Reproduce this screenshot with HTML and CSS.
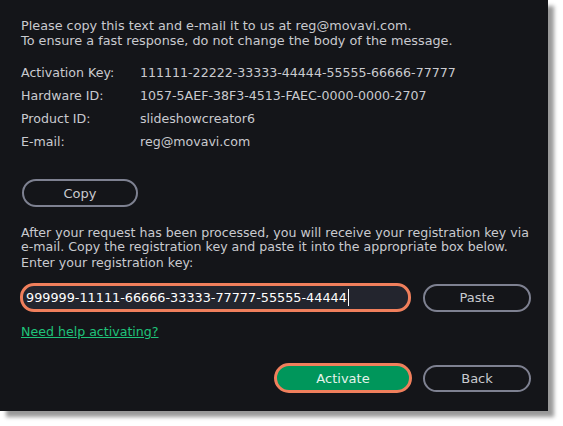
FILE: index.html
```html
<!DOCTYPE html>
<html>
<head>
<meta charset="utf-8">
<link rel="stylesheet" href="styles.css">
</head>
<body>
<div class="dialog">
  <p class="intro">Please copy this text and e-mail it to us at reg@movavi.com.<br>To ensure a fast response, do not change the body of the message.</p>
  <div class="info">
    <span class="label">Activation Key:</span><span class="value">111111-22222-33333-44444-55555-66666-77777</span>
    <span class="label">Hardware ID:</span><span class="value">1057-5AEF-38F3-4513-FAEC-0000-0000-2707</span>
    <span class="label">Product ID:</span><span class="value">slideshowcreator6</span>
    <span class="label">E-mail:</span><span class="value">reg@movavi.com</span>
  </div>
  <button class="btn btn-copy">Copy</button>
  <p class="after">After your request has been processed, you will receive your registration key via e-mail. Copy the registration key and paste it into the appropriate box below.</p>
  <p class="enter">Enter your registration key:</p>
  <div class="key-row">
    <div class="key-input">999999-11111-66666-33333-77777-55555-44444<span class="caret"></span></div>
    <button class="btn btn-paste">Paste</button>
  </div>
  <a class="help" href="#">Need help activating?</a>
  <div class="actions">
    <button class="btn btn-activate">Activate</button>
    <button class="btn btn-back">Back</button>
  </div>
</div>
</body>
</html>
```
FILE: styles.css
```css
html, body {
  margin: 0;
  padding: 0;
  background: #ffffff;
}
body {
  width: 563px;
  height: 426px;
  overflow: hidden;
  font-family: "DejaVu Sans", Verdana, sans-serif;
  font-size: 12.6px;
  color: #c9cacf;
}
.dialog {
  width: 548px;
  height: 411px;
  box-sizing: border-box;
  background: #141519;
  box-shadow: 6px 6px 4px rgba(0, 0, 0, 0.4);
  padding: 18px 17px 0 21px;
  display: flex;
  flex-direction: column;
}
p { margin: 0; }
.intro {
  font-size: 12.8px;
  line-height: 15px;
}
.info {
  margin-top: 13px;
  display: grid;
  grid-template-columns: 119px auto;
  line-height: 23px;
}
.btn {
  font-family: inherit;
  font-size: 13px;
  color: #c9cacf;
  background: transparent;
  border: 2px solid #7e8191;
  border-radius: 14px;
  height: 28px;
  padding: 0;
  cursor: pointer;
}
.btn-copy {
  margin-top: 26px;
  margin-left: 1px;
  width: 116px;
}
.after {
  margin-top: 19px;
  line-height: 14px;
}
.enter {
  margin-top: 1px;
  line-height: 16px;
}
.key-row {
  margin-top: 12px;
  margin-left: -1px;
  display: flex;
  align-items: center;
  gap: 12px;
}
.key-input {
  width: 391px;
  height: 29px;
  box-sizing: border-box;
  border: 3px solid #f07f5c;
  border-radius: 14px;
  background: #23252e;
  color: #ffffff;
  font-size: 12.8px;
  padding-left: 3px;
  display: flex;
  align-items: center;
}
.caret {
  display: inline-block;
  width: 1px;
  height: 17px;
  background: #ffffff;
  margin-left: 1px;
}
.btn-paste {
  width: 108px;
}
.help {
  margin-top: 12px;
  align-self: flex-start;
  color: #1fc37a;
  line-height: 16px;
  text-decoration: underline;
}
.actions {
  margin-top: 23px;
  display: flex;
  justify-content: flex-end;
  align-items: center;
  gap: 11px;
}
.btn-activate {
  width: 138px;
  height: 30px;
  background: #00965b;
  border: 3px solid #f07f5c;
  border-radius: 15px;
  color: #e6f3ec;
}
.btn-back {
  width: 108px;
  height: 27px;
}
```
